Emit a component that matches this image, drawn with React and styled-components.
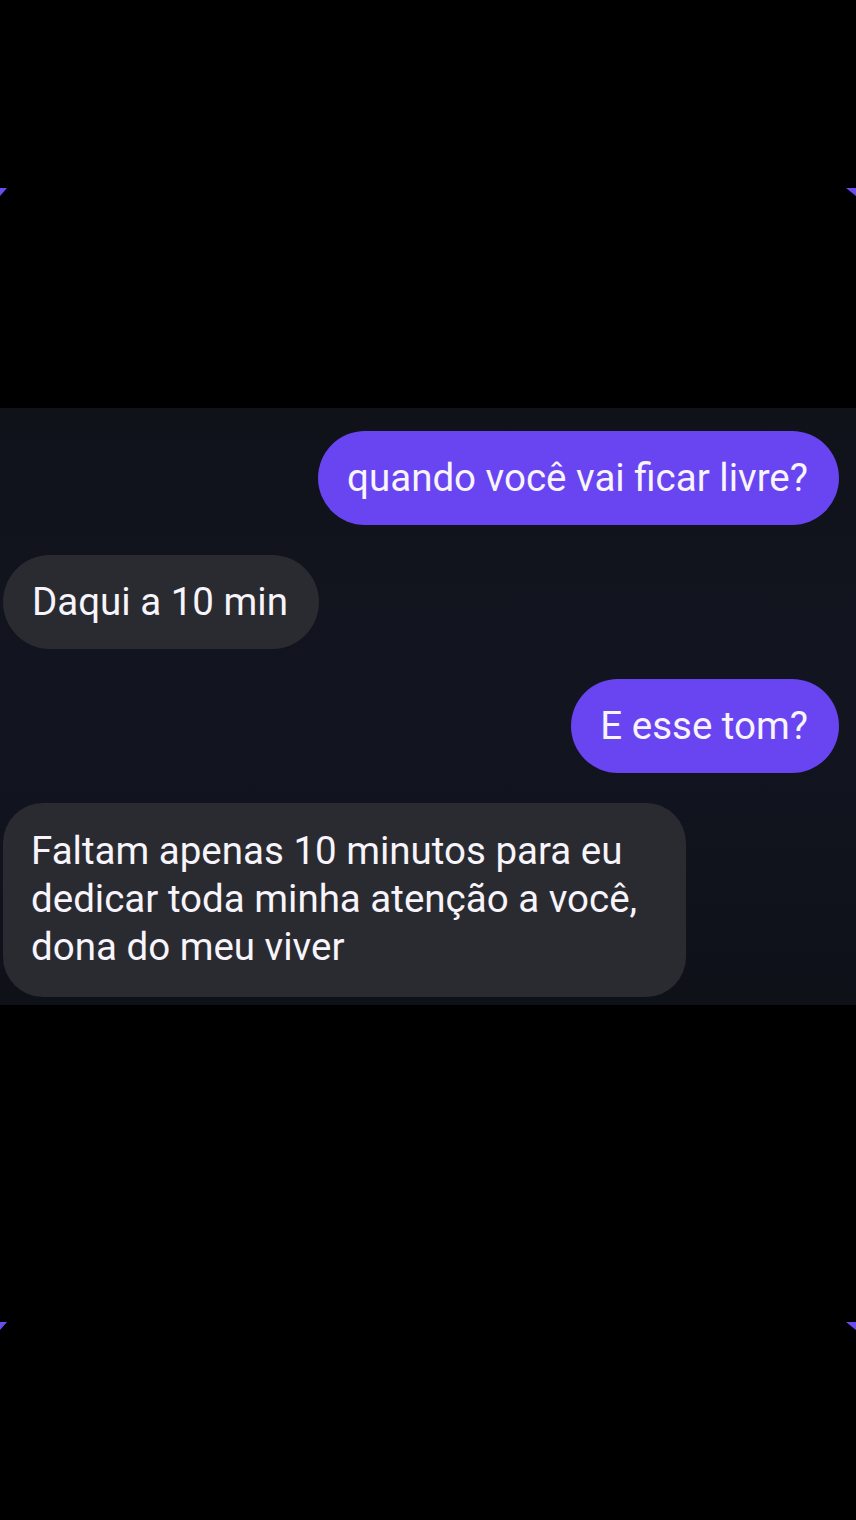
import React from 'react'
import styled, { createGlobalStyle } from 'styled-components'

const GlobalStyle = createGlobalStyle`
	html, body {
		margin: 0;
		padding: 0;
		background: #000000;
	}
	body {
		font-family: Roboto, "Noto Sans", sans-serif;
		-webkit-font-smoothing: antialiased;
	}
`

const messages = [
	{ id: 1, mine: true, text: 'quando você vai ficar livre?' },
	{ id: 2, mine: false, text: 'Daqui a 10 min' },
	{ id: 3, mine: true, text: 'E esse tom?' },
	{
		id: 4,
		mine: false,
		text: 'Faltam apenas 10 minutos para eu dedicar toda minha atenção a você, dona do meu viver',
	},
]

const Corners = () => (
	<CornerRow>
		<Corner $side="left" />
		<Corner $side="right" />
	</CornerRow>
)

const App = () => (
	<Screen>
		<GlobalStyle />
		<Spacer $h={188} />
		<Corners />
		<Spacer $h={212} />
		<Chat>
			{messages.map(m => (
				<Row key={m.id} $mine={m.mine}>
					<Bubble $mine={m.mine} $multi={m.text.length > 40}>
						{m.text}
					</Bubble>
				</Row>
			))}
		</Chat>
		<Spacer $h={317} />
		<Corners />
	</Screen>
)

const Screen = styled.div`
	width: 856px;
	height: 1520px;
	background: #000000;
	display: flex;
	flex-direction: column;
	overflow: hidden;
`

const Spacer = styled.div`
	flex: none;
	height: ${props => props.$h}px;
`

const CornerRow = styled.div`
	flex: none;
	display: flex;
	justify-content: space-between;
	height: 8px;
`

const Corner = styled.div`
	width: 0;
	height: 0;
	border-top: 8px solid #6b4cf0;
	${props =>
		props.$side === 'left'
			? 'border-right: 7px solid transparent;'
			: 'border-left: 10px solid transparent;'}
`

const Chat = styled.div`
	flex: none;
	height: 597px;
	box-sizing: border-box;
	padding: 23px 17px 10px 3px;
	background: linear-gradient(180deg, #10121a 0%, #121520 50%, #0f1119 100%);
	display: flex;
	flex-direction: column;
	gap: 30px;
`

const Row = styled.div`
	display: flex;
	justify-content: ${props => (props.$mine ? 'flex-end' : 'flex-start')};
`

const Bubble = styled.div`
	box-sizing: border-box;
	max-width: 683px;
	padding: ${props => (props.$multi ? '24px 30px 26px 28px' : '23px 31px 23px 29px')};
	border-radius: ${props => (props.$multi ? '40px' : '48px')};
	background: ${props => (props.$mine ? '#6944f1' : '#2a2b31')};
	color: #f7f4fb;
	font-size: 38.5px;
	line-height: 48px;
	white-space: ${props => (props.$multi ? 'normal' : 'nowrap')};
`

export default App
